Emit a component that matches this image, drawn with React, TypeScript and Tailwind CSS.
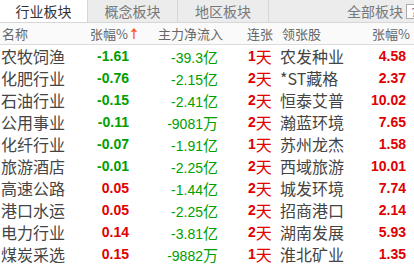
import React from "react";

type Row = {
  name: string;
  chg: string;
  flow: string;
  unit: string;
  days: string;
  stock: string;
  pct: string;
};

const rows: Row[] = [
  { name: "农牧饲渔", chg: "-1.61", flow: "-39.3", unit: "亿", days: "1", stock: "农发种业", pct: "4.58" },
  { name: "化肥行业", chg: "-0.76", flow: "-2.15", unit: "亿", days: "2", stock: "*ST藏格", pct: "2.37" },
  { name: "石油行业", chg: "-0.15", flow: "-2.41", unit: "亿", days: "2", stock: "恒泰艾普", pct: "10.02" },
  { name: "公用事业", chg: "-0.11", flow: "-9081", unit: "万", days: "2", stock: "瀚蓝环境", pct: "7.65" },
  { name: "化纤行业", chg: "-0.07", flow: "-1.91", unit: "亿", days: "1", stock: "苏州龙杰", pct: "1.58" },
  { name: "旅游酒店", chg: "-0.01", flow: "-2.25", unit: "亿", days: "2", stock: "西域旅游", pct: "10.01" },
  { name: "高速公路", chg: "0.05", flow: "-1.44", unit: "亿", days: "2", stock: "城发环境", pct: "7.74" },
  { name: "港口水运", chg: "0.05", flow: "-2.25", unit: "亿", days: "2", stock: "招商港口", pct: "2.14" },
  { name: "电力行业", chg: "0.14", flow: "-3.81", unit: "亿", days: "2", stock: "湖南发展", pct: "5.93" },
  { name: "煤炭采选", chg: "0.15", flow: "-9882", unit: "万", days: "1", stock: "淮北矿业", pct: "1.35" },
];

const cjk = "[font-family:'Noto_Sans_CJK_SC',sans-serif]";
const num = "[font-family:'Liberation_Sans',sans-serif] font-bold text-[14px]";
const numPlain = "[font-family:'Liberation_Sans',sans-serif] text-[14px]";

export default function App() {
  return (
    <div className={`w-[414px] h-[267px] overflow-hidden bg-white ${cjk} text-[#333]`}>
      <div className="flex h-[23px] bg-[#ececec] border-b border-[#d6d6d6] text-[14px] leading-[22px] overflow-hidden">
        <div className="w-[88px] bg-white text-center text-[#333] border-r border-[#d6d6d6]">行业板块</div>
        <div className="w-[90px] text-center text-[#777] border-r border-[#d6d6d6]">概念板块</div>
        <div className="w-[91px] text-center text-[#777] border-r border-[#d6d6d6]">地区板块</div>
        <div className="flex-1 flex items-center justify-end text-[#777] mr-[-8px]">
          <span>全部板块</span>
          <span className="ml-[3px] w-[16px] h-[15px] border border-[#aaa] bg-white text-[12px] leading-[13px] text-center">?</span>
        </div>
      </div>
      <div className="flex items-center h-[22px] border-b border-[#dcdcdc] text-[13px] text-[#666] bg-[#fafafa]">
        <span className="w-[90px] pl-[2px]">名称</span>
        <span className="w-[68px] flex items-center">
          张幅%<span className="text-[#ff5500] text-[12px] font-bold">↑</span>
        </span>
        <span className="w-[89px]">主力净流入</span>
        <span className="w-[35px]">连张</span>
        <span className="flex-1">领张股</span>
        <span className="pr-[4px]">张幅%</span>
      </div>
      {rows.map((r) => {
        const up = !r.chg.startsWith("-");
        return (
          <div key={r.name} className="flex items-center h-[22px]">
            <span className="w-[80px] pl-[1px] text-[16px] text-[#444]">{r.name}</span>
            <span className={`w-[49px] text-right ${num} ${up ? "text-[#e00000]" : "text-[#00a000]"}`}>{r.chg}</span>
            <span className="w-[89px] text-right text-[#00a000]">
              <span className={numPlain}>{r.flow}</span>
              <span className="text-[15px]">{r.unit}</span>
            </span>
            <span className="w-[62px] pl-[30px] text-[#e00000] flex items-center">
              <span className={num}>{r.days}</span>
              <span className="text-[16px]">天</span>
            </span>
            <span className="w-[82px] text-[16px] text-[#444]">{r.stock}</span>
            <span className={`flex-1 text-right pr-[8px] ${num} text-[#e00000]`}>{r.pct}</span>
          </div>
        );
      })}
    </div>
  );
}
